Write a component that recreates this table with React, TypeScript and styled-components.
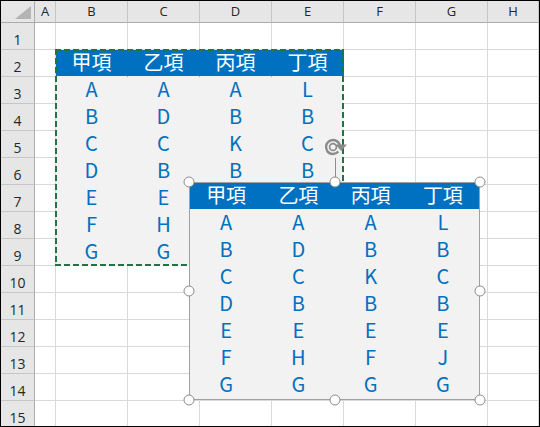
import React from "react";
import styled, { createGlobalStyle, css } from "styled-components";

const GlobalStyle = createGlobalStyle`
  html, body { margin: 0; padding: 0; background: #ffffff; }
  #root { width: 540px; height: 427px; }
`;

const COLS = ["A", "B", "C", "D", "E", "F", "G", "H"];
const ROWS = Array.from({ length: 15 }, (_, i) => i + 1);

const TABLE: string[][] = [
  ["甲項", "乙項", "丙項", "丁項"],
  ["A", "A", "A", "L"],
  ["B", "D", "B", "B"],
  ["C", "C", "K", "C"],
  ["D", "B", "B", "B"],
  ["E", "E", "E", "E"],
  ["F", "H", "F", "J"],
  ["G", "G", "G", "G"],
];

const BLUE = "#0070c0";
const FILL = "#f2f2f2";
const GRID = "#d9d9d9";
const HEADER_BG = "#e6e6e6";
const HANDLE = "#8c8c8c";

const Frame = styled.div`
  position: relative;
  width: 540px;
  height: 427px;
  box-sizing: border-box;
  border: 1px solid #000;
  overflow: hidden;
  background: #fff;
`;

const Sheet = styled.div`
  display: grid;
  grid-template-columns: 34px 21px repeat(6, 72px) 1fr;
  grid-template-rows: 22px repeat(15, 27px);
`;

const Corner = styled.div`
  box-sizing: border-box;
  background: ${HEADER_BG};
  border-right: 1px solid #ababab;
  border-bottom: 1px solid #ababab;
  display: flex;
`;

const ColHeader = styled.div`
  box-sizing: border-box;
  background: ${HEADER_BG};
  border-right: 1px solid #c6c6c6;
  border-bottom: 1px solid #ababab;
  display: flex;
  align-items: center;
  justify-content: center;
  font-family: "Open Sans", "Noto Sans", sans-serif;
  font-size: 13px;
  color: #262626;
  padding-bottom: 1px;
`;

const RowHeader = styled.div`
  box-sizing: border-box;
  background: ${HEADER_BG};
  border-right: 1px solid #ababab;
  border-bottom: 1px solid #c6c6c6;
  display: flex;
  align-items: flex-end;
  justify-content: center;
  font-family: "Open Sans", "Noto Sans", sans-serif;
  font-size: 14px;
  line-height: 16px;
  color: #262626;
  padding-bottom: 1px;
`;

type Tone = "plain" | "head" | "body";

const Cell = styled.div<{ $tone: Tone }>`
  box-sizing: border-box;
  display: flex;
  align-items: center;
  justify-content: center;
  font-family: "Noto Sans CJK TC", "Noto Sans", sans-serif;
  font-size: 20px;
  line-height: 22px;
  padding-bottom: 2px;
  ${({ $tone }) =>
    $tone === "head"
      ? css`
          background: ${BLUE};
          color: #fff;
          border-right: 1px solid ${BLUE};
          border-bottom: 1px solid ${FILL};
        `
      : $tone === "body"
      ? css`
          background: ${FILL};
          color: ${BLUE};
          border-right: 1px solid ${FILL};
          border-bottom: 1px solid ${FILL};
        `
      : css`
          background: #fff;
          border-right: 1px solid ${GRID};
          border-bottom: 1px solid ${GRID};
        `}
`;

const CopyMarquee = styled.div`
  position: absolute;
  left: 54px;
  top: 48px;
  width: 289px;
  height: 217px;
  pointer-events: none;
  background:
    repeating-linear-gradient(90deg, #217346 0 6px, transparent 6px 9px) top left / 100% 2px no-repeat,
    repeating-linear-gradient(90deg, #217346 0 6px, transparent 6px 9px) bottom left / 100% 2px no-repeat,
    repeating-linear-gradient(180deg, #217346 0 6px, transparent 6px 9px) top left / 2px 100% no-repeat,
    repeating-linear-gradient(180deg, #217346 0 6px, transparent 6px 9px) top right / 2px 100% no-repeat;
`;

const Picture = styled.div`
  position: absolute;
  left: 188px;
  top: 181px;
  width: 291px;
  height: 218px;
  box-sizing: border-box;
  border: 1px solid #a0a0a0;
  background: ${FILL};
`;

const PictureTable = styled.div`
  display: grid;
  grid-template-columns: repeat(4, 1fr);
  grid-template-rows: 26px repeat(7, 27px);
`;

const PicCell = styled.div<{ $head: boolean }>`
  display: flex;
  align-items: center;
  justify-content: center;
  font-family: "Noto Sans CJK TC", "Noto Sans", sans-serif;
  font-size: 20px;
  line-height: 22px;
  padding-bottom: 2px;
  background: ${({ $head }) => ($head ? BLUE : FILL)};
  color: ${({ $head }) => ($head ? "#fff" : BLUE)};
`;

const HandleLayer = styled.div`
  position: absolute;
  inset: -1px;
  pointer-events: none;
`;

const Handle = styled.div<{ $x: number; $y: number }>`
  position: absolute;
  left: ${({ $x }) => $x}%;
  top: ${({ $y }) => $y}%;
  width: 11px;
  height: 11px;
  box-sizing: border-box;
  border: 1.6px solid ${HANDLE};
  border-radius: 50%;
  background: #fff;
  transform: translate(-50%, -50%);
`;

const RotateHandle = styled.div`
  position: absolute;
  left: calc(50% - 12px);
  bottom: 100%;
  width: 30px;
  display: flex;
  flex-direction: column;
`;

const Stem = styled.div`
  margin-left: 12px;
  width: 1px;
  height: 24px;
  background: ${HANDLE};
`;

const CornerMark = () => (
  <svg width="33" height="21" viewBox="0 0 33 21">
    <polygon points="30,5 30,18 14,18" fill="#b4b4b4" />
  </svg>
);

const RotateIcon = () => (
  <svg width="30" height="22" viewBox="0 0 30 22">
    <path
      d="M 15.36 15.5 A 7 7 0 1 1 16.9 9.8"
      fill="none"
      stroke={HANDLE}
      strokeWidth="2.4"
    />
    <circle cx="10" cy="11" r="3.4" fill="none" stroke={HANDLE} strokeWidth="1.7" />
    <polygon points="12.5,8.5 24,8.5 18.2,15" fill={HANDLE} />
  </svg>
);

const HANDLE_SPOTS: [number, number][] = [
  [0, 0],
  [50, 0],
  [100, 0],
  [0, 50],
  [100, 50],
  [0, 100],
  [50, 100],
  [100, 100],
];

function cellContent(row: number, colIndex: number): { tone: Tone; text: string } {
  if (row >= 2 && row <= 9 && colIndex >= 1 && colIndex <= 4) {
    return {
      tone: row === 2 ? "head" : "body",
      text: TABLE[row - 2][colIndex - 1],
    };
  }
  return { tone: "plain", text: "" };
}

export default function App() {
  return (
    <>
      <GlobalStyle />
      <Frame>
        <Sheet>
          <Corner>
            <CornerMark />
          </Corner>
          {COLS.map((c) => (
            <ColHeader key={c}>{c}</ColHeader>
          ))}
          {ROWS.map((r) => (
            <React.Fragment key={r}>
              <RowHeader>{r}</RowHeader>
              {COLS.map((c, ci) => {
                const { tone, text } = cellContent(r, ci);
                return (
                  <Cell key={c} $tone={tone}>
                    {text}
                  </Cell>
                );
              })}
            </React.Fragment>
          ))}
        </Sheet>
        <CopyMarquee />
        <Picture>
          <PictureTable>
            {TABLE.map((row, ri) =>
              row.map((v, ci) => (
                <PicCell key={`${ri}-${ci}`} $head={ri === 0}>
                  {v}
                </PicCell>
              ))
            )}
          </PictureTable>
          <HandleLayer>
            <RotateHandle>
              <RotateIcon />
              <Stem />
            </RotateHandle>
            {HANDLE_SPOTS.map(([x, y]) => (
              <Handle key={`${x}-${y}`} $x={x} $y={y} />
            ))}
          </HandleLayer>
        </Picture>
      </Frame>
    </>
  );
}
